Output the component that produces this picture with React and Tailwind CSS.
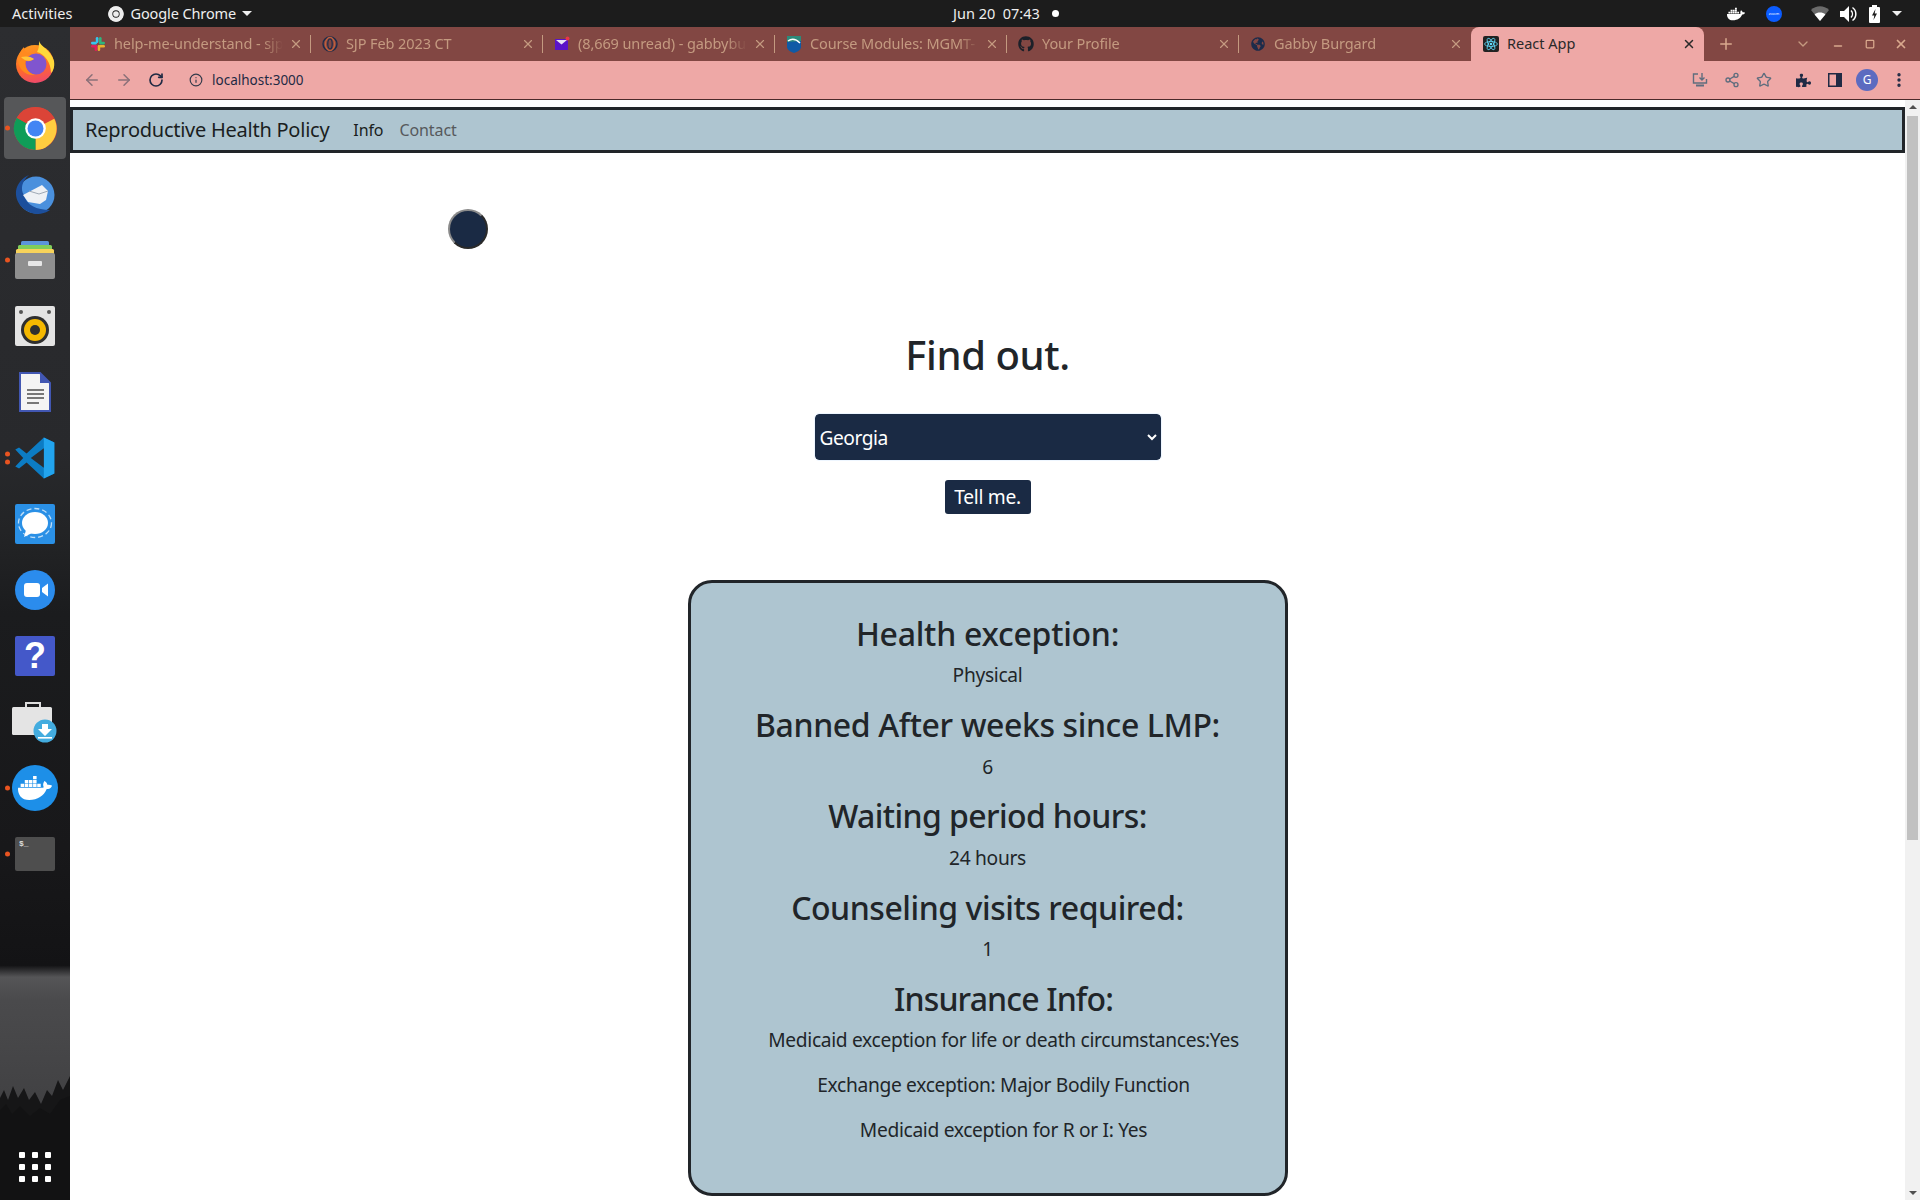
import React from "react";
import { ArrowLeft, ArrowRight, RotateCw, Info, Share2, Star, EllipsisVertical, X, Plus, ChevronDown, Minus, Square } from "lucide-react";
import { FaDocker, FaGithub, FaPuzzlePiece, FaGlobeAmericas } from "react-icons/fa";

const font = "font-['Noto_Sans','Open_Sans',sans-serif]";

function ChromeIcon({ size = 45, mono = false }) {
  const r = mono ? ["#eee", "#eee", "#eee"] : ["#db4437", "#0f9d58", "#ffcd40"];
  return (
    <svg width={size} height={size} viewBox="0 0 48 48">
      <circle cx="24" cy="24" r="23" fill={r[0]} />
      <path d="M24 24 L44 13.5 A23 23 0 0 1 24 47 Z" fill={r[2]} />
      <path d="M24 24 L24 47 A23 23 0 0 1 4 12.5 Z" fill={r[1]} />
      <path d="M4 12.5 A23 23 0 0 1 44 13 L24 13 A11 11 0 0 0 14.5 18.5 Z" fill={r[0]} />
      <circle cx="24" cy="24" r="11" fill={mono ? "#1c1c1c" : "#fff"} />
      <circle cx="24" cy="24" r="8.5" fill={mono ? "#eee" : "#4285f4"} />
    </svg>
  );
}

function Firefox() {
  return (
    <svg width="40" height="42" viewBox="0 0 40 42">
      <defs>
        <linearGradient id="ff" x1="0.3" y1="0" x2="0.5" y2="1">
          <stop offset="0" stopColor="#ff9a1f" />
          <stop offset="0.6" stopColor="#ff6a2b" />
          <stop offset="1" stopColor="#ef4a6a" />
        </linearGradient>
      </defs>
      <circle cx="20" cy="23" r="19" fill="url(#ff)" />
      <path d="M24 0 C25 5 36 9 39 20 C40 26 38 30 36 32 C36 22 30 13 22 11 C24 8 24 4 24 0 Z" fill="#ffd93b" />
      <circle cx="21" cy="23" r="10.5" fill="#8055cf" />
      <path d="M3 20 C3 14 6 9 9 6 C9 10 12 12 15 13 C12 15 12 16 19 18 C15 21 13 20 10 20 C10 27 13 32 20 34 C10 35 4 28 3 20 Z" fill="#ff8a1f" />
      <path d="M6 16 C10 15 16 15 19 18 C15 21 9 20 6 16 Z" fill="#ffc53b" />
    </svg>
  );
}

function Thunderbird() {
  return (
    <svg width="40" height="40" viewBox="0 0 40 40">
      <circle cx="21" cy="21" r="18.5" fill="#4a90dd" />
      <path d="M1 17 C0 28 8 38 21 40 C28 40 32 38 35 36 C22 36 11 31 9 21 C5 15 7 7 14 1 C7 4 2 10 1 17 Z" fill="#1c4f9c" />
      <path d="M8 21 L27 11 L33 17 L31 26 L25 30 L13 28 Z" fill="#eef1f5" />
      <path d="M14 17 L24 20 L33 17" stroke="#9fa9b5" strokeWidth="1" fill="none" />
    </svg>
  );
}

function Files() {
  return (
    <svg width="40" height="38" viewBox="0 0 40 38">
      <rect x="6" y="0" width="28" height="8" rx="1.5" fill="#5b95dc" />
      <rect x="3" y="4" width="34" height="8" rx="1.5" fill="#7fce5b" />
      <rect x="1" y="8" width="38" height="8" rx="1.5" fill="#f8d35a" />
      <rect x="0" y="12" width="40" height="26" rx="2" fill="#8f8f8f" />
      <rect x="13" y="20" width="14" height="5" rx="1" fill="#e6e6e6" />
    </svg>
  );
}

function Rhythmbox() {
  return (
    <svg width="40" height="40" viewBox="0 0 40 40">
      <rect width="40" height="40" rx="2" fill="#e4e4e4" />
      <circle cx="6" cy="6" r="2" fill="#555" />
      <circle cx="34" cy="6" r="2" fill="#555" />
      <circle cx="20" cy="24" r="14" fill="#2f2f2f" />
      <circle cx="20" cy="24" r="11" fill="#f5b800" />
      <circle cx="20" cy="24" r="5" fill="#2f2f2f" />
    </svg>
  );
}

function Writer() {
  return (
    <svg width="32" height="40" viewBox="0 0 32 40">
      <path d="M1 1 H21 L31 11 V39 H1 Z" fill="#f4f4f4" stroke="#4257b2" strokeWidth="2" />
      <path d="M21 1 L31 11 H21 Z" fill="#4257b2" />
      <path d="M8 18 H25 M8 22 H25 M8 26 H25 M8 31 H20" stroke="#777" strokeWidth="2" />
    </svg>
  );
}

function VSCode() {
  return (
    <svg width="42" height="42" viewBox="0 0 100 100">
      <path d="M71 99 L96 87 V13 L71 1 L30 39 L12 25 L3 30 L22 50 L3 70 L12 75 L30 61 Z" fill="#0c7cc4" />
      <path d="M71 1 L96 13 V87 L71 99 Z" fill="#22a4ee" />
      <path d="M71 27 L71 73 L40 50 Z" fill="#2b2c2f" />
    </svg>
  );
}

function Signal() {
  return (
    <svg width="40" height="40" viewBox="0 0 40 40">
      <rect width="40" height="40" rx="2" fill="#2a90e6" />
      <ellipse cx="20" cy="19" rx="13" ry="11" fill="#fff" />
      <path d="M11 26 L9 33 L17 29 Z" fill="#fff" />
      <ellipse cx="20" cy="19" rx="16.5" ry="14.5" fill="none" stroke="#fff" strokeWidth="1.3" strokeDasharray="5 3" opacity="0.7" />
    </svg>
  );
}

function ZoomApp() {
  return (
    <svg width="40" height="40" viewBox="0 0 40 40">
      <circle cx="20" cy="20" r="20" fill="#2b8ced" />
      <rect x="9" y="13" width="16" height="14" rx="3" fill="#fff" />
      <path d="M27 18 L33 13.5 V26.5 L27 22 Z" fill="#fff" />
    </svg>
  );
}

function Help() {
  return (
    <div className="flex h-[40px] w-[40px] items-center justify-center rounded-[2px] bg-[#4458c9] font-['Liberation_Sans',sans-serif] text-[36px] font-bold leading-none text-white">?</div>
  );
}

function Software() {
  return (
    <svg width="46" height="42" viewBox="0 0 46 42">
      <path d="M14 6 V2 H28 V6" fill="none" stroke="#ddd" strokeWidth="2" />
      <rect x="0" y="6" width="40" height="28" rx="1.5" fill="#e4e4e4" />
      <circle cx="33" cy="30" r="11.5" fill="#43acdf" />
      <path d="M30 23 H36 V28 H40 L33 35 L26 28 H30 Z" fill="#fff" />
      <rect x="26" y="36" width="14" height="1.6" fill="#fff" />
    </svg>
  );
}

function DockerDock() {
  return (
    <div className="flex h-[46px] w-[46px] items-center justify-center rounded-full bg-[#1d8fe8] text-white">
      <FaDocker size={34} />
    </div>
  );
}

function Terminal() {
  return (
    <div className="flex h-[34px] w-[40px] items-start rounded-[2px] bg-[#4e4e4e] px-[4px] pt-[1px] text-[8px] font-bold leading-[12px] text-[#ddd]">
      <span className="font-['Liberation_Mono',monospace]">$_</span>
    </div>
  );
}

function GridIcon() {
  return (
    <div className="grid grid-cols-3 gap-x-[7px] gap-y-[6px]">
      {[0, 1, 2, 3, 4, 5, 6, 7, 8].map((i) => (
        <div key={i} className="h-[6px] w-[6px] rounded-[1px] bg-white" />
      ))}
    </div>
  );
}

function DockItem({ children, dots = 0, active = false }) {
  return (
    <div className="relative flex h-[66px] w-[70px] shrink-0 items-center justify-center">
      {active && <div className="absolute inset-x-[4px] inset-y-[2px] rounded-[4px] bg-[#565759]" />}
      <div className="relative flex items-center justify-center">{children}</div>
      {dots > 0 && (
        <div className="absolute left-[5px] top-1/2 flex -translate-y-1/2 flex-col gap-[3px]">
          {Array.from({ length: dots }).map((_, i) => (
            <div key={i} className="h-[5px] w-[5px] rounded-full bg-[#e95420]" />
          ))}
        </div>
      )}
    </div>
  );
}

function Trees() {
  return (
    <svg className="absolute bottom-0 left-0" width="70" height="130" viewBox="0 0 70 130" preserveAspectRatio="none">
      <path d="M0 28 L4 20 L8 30 L13 16 L18 28 L24 18 L29 30 L35 22 L41 34 L47 20 L52 26 L58 10 L63 20 L70 6 V130 H0 Z" fill="#161617" />
      <path d="M0 40 L6 34 L12 44 L20 36 L30 46 L40 38 L50 44 L60 30 L70 26 V130 H0 Z" fill="#121213" />
    </svg>
  );
}

function Dock() {
  return (
    <aside className="relative flex w-[70px] shrink-0 flex-col bg-[linear-gradient(180deg,#2c2d30_0%,#28292c_36%,#232426_43%,#1b1c1e_50%,#18181a_70%,#131315_80%,#555557_81%,#4a4a4c_83%,#414143_92%,#161617_100%)] pt-[2px]">
      <Trees />
      <DockItem><Firefox /></DockItem>
      <DockItem active dots={1}><ChromeIcon /></DockItem>
      <DockItem><Thunderbird /></DockItem>
      <DockItem dots={1}><Files /></DockItem>
      <DockItem><Rhythmbox /></DockItem>
      <DockItem><Writer /></DockItem>
      <DockItem dots={2}><VSCode /></DockItem>
      <DockItem><Signal /></DockItem>
      <DockItem><ZoomApp /></DockItem>
      <DockItem><Help /></DockItem>
      <DockItem><Software /></DockItem>
      <DockItem dots={1}><DockerDock /></DockItem>
      <DockItem dots={1}><Terminal /></DockItem>
      <div className="relative mt-auto"><DockItem><GridIcon /></DockItem></div>
    </aside>
  );
}

function WifiWedge() {
  return (
    <svg width="18" height="15" viewBox="0 0 18 15">
      <path d="M0 4 C5 -1 13 -1 18 4 L9 15 Z" fill="#6a6a6a" />
      <path d="M3.6 8.4 C6.5 6 11.5 6 14.4 8.4 L9 15 Z" fill="#fff" />
    </svg>
  );
}

function SpeakerIcon() {
  return (
    <svg width="18" height="16" viewBox="0 0 18 16">
      <path d="M0 5 H4 L9 0 V16 L4 11 H0 Z" fill="#fff" />
      <path d="M11 4.5 A5 5 0 0 1 11 11.5" fill="none" stroke="#fff" strokeWidth="1.5" />
      <path d="M12.5 1.5 A8 8 0 0 1 12.5 14.5" fill="none" stroke="#fff" strokeWidth="1.5" />
    </svg>
  );
}

function BatteryIcon() {
  return (
    <svg width="11" height="18" viewBox="0 0 11 18">
      <rect x="3" y="0" width="5" height="2" fill="#fff" />
      <rect x="0" y="2" width="11" height="16" rx="1" fill="#fff" />
      <path d="M6.5 4 L3 10.5 H5.3 L4.5 15 L8 8.5 H5.7 Z" fill="#1c1c1c" />
    </svg>
  );
}

function TopBar() {
  return (
    <header className={`relative flex h-[27px] shrink-0 items-center bg-[#1c1c1c] pl-[12px] text-[14.5px] text-[#eeeeee] ${font}`}>
      <span>Activities</span>
      <span className="ml-[36px] flex items-center gap-[6px]">
        <ChromeIcon size={16} mono />
        <span className="tracking-[-0.1px]">Google Chrome</span>
        <span className="h-0 w-0 border-x-[5px] border-t-[5px] border-x-transparent border-t-[#eeeeee]" />
      </span>
      <span className="absolute left-[953px] top-[3px] flex items-center gap-[12px]">
        <span>Jun 20&nbsp;&nbsp;07:43</span>
        <span className="h-[7px] w-[7px] rounded-full bg-white" />
      </span>
      <div className="ml-auto flex items-center pr-[18px]">
        <FaDocker size={18} className="text-white" />
        <div className="ml-[21px] flex h-[16px] w-[16px] items-center justify-center rounded-full bg-[#0b5cff] text-[4px] text-white">zoom</div>
        <span className="ml-[29px]"><WifiWedge /></span>
        <span className="ml-[11px]"><SpeakerIcon /></span>
        <span className="ml-[11px]"><BatteryIcon /></span>
        <span className="ml-[12px] h-0 w-0 border-x-[5px] border-t-[5px] border-x-transparent border-t-[#eeeeee]" />
      </div>
    </header>
  );
}

function SlackIcon() {
  return (
    <svg width="16" height="16" viewBox="0 0 16 16">
      <rect x="5.8" y="1" width="2.6" height="6" rx="1.3" fill="#36c5f0" />
      <rect x="1" y="5.8" width="6" height="2.6" rx="1.3" fill="#36c5f0" />
      <rect x="9" y="1" width="2.6" height="6" rx="1.3" fill="#2eb67d" />
      <rect x="9" y="5.8" width="6" height="2.6" rx="1.3" fill="#2eb67d" />
      <rect x="7.6" y="9" width="2.6" height="6" rx="1.3" fill="#ecb22e" />
      <rect x="9" y="9" width="6" height="2.6" rx="1.3" fill="#ecb22e" />
      <rect x="4.6" y="9" width="2.6" height="6" rx="1.3" fill="#e01e5a" />
      <rect x="1" y="9" width="6" height="2.6" rx="1.3" fill="#e01e5a" />
    </svg>
  );
}

function RingIcon() {
  return (
    <svg width="16" height="16" viewBox="0 0 16 16" fill="none">
      <circle cx="8" cy="8" r="7" stroke="#1c2b4a" strokeWidth="1.4" />
      <ellipse cx="8" cy="8" rx="4.6" ry="6.6" stroke="#c0603c" strokeWidth="1.2" />
      <ellipse cx="8" cy="8" rx="2.2" ry="5" stroke="#1c2b4a" strokeWidth="1.2" />
    </svg>
  );
}

function MailIcon() {
  return (
    <svg width="16" height="16" viewBox="0 0 16 16">
      <rect x="1" y="3" width="13" height="11" fill="#5a14c8" />
      <path d="M2 4 L7.5 8.5 L13 4 Z" fill="#e9e4f5" />
      <circle cx="13.5" cy="2.5" r="2" fill="#e8344a" />
    </svg>
  );
}

function ShieldIcon() {
  return (
    <svg width="14" height="18" viewBox="0 0 14 18">
      <path d="M0 1 H14 V12 C14 15 10 17 7 18 C4 17 0 15 0 12 Z" fill="#0f5aa6" />
      <path d="M0 1 H14 V6 L0 7 Z" fill="#2d8a7a" />
      <path d="M1 6 C5 3 9 4 13 8" stroke="#fff" strokeWidth="1.5" fill="none" />
    </svg>
  );
}

function ReactIcon() {
  return (
    <svg width="16" height="16" viewBox="0 0 16 16" fill="none">
      <rect width="16" height="16" rx="2" fill="#222" />
      <g stroke="#61dafb" strokeWidth="0.8">
        <ellipse cx="8" cy="8" rx="6.4" ry="2.5" />
        <ellipse cx="8" cy="8" rx="6.4" ry="2.5" transform="rotate(60 8 8)" />
        <ellipse cx="8" cy="8" rx="6.4" ry="2.5" transform="rotate(120 8 8)" />
      </g>
      <circle cx="8" cy="8" r="1.3" fill="#61dafb" />
    </svg>
  );
}

const tabs = [
  { title: "help-me-understand - sjp", icon: <SlackIcon /> },
  { title: "SJP Feb 2023 CT", icon: <RingIcon /> },
  { title: "(8,669 unread) - gabbybu", icon: <MailIcon /> },
  { title: "Course Modules: MGMT-", icon: <ShieldIcon /> },
  { title: "Your Profile", icon: <FaGithub size={16} className="text-[#1c2029]" /> },
  { title: "Gabby Burgard", icon: <FaGlobeAmericas size={14} className="text-[#1c2b4a]" /> },
];

function TabBar() {
  return (
    <div className={`flex h-[34px] shrink-0 items-stretch bg-[#824743] pl-[9px] text-[14.5px] ${font}`}>
      {tabs.map((t) => (
        <div key={t.title} className="relative flex w-[232px] items-center pl-[11px] pr-[8px] text-[#c49a80]">
          <span className="flex w-[16px] shrink-0 items-center justify-center">{t.icon}</span>
          <span className="ml-[8px] min-w-0 flex-1 overflow-hidden whitespace-nowrap tracking-[-0.1px] [mask-image:linear-gradient(90deg,#000_88%,transparent_100%)]">{t.title}</span>
          <X size={14} className="ml-[6px] shrink-0" />
          {t.title !== "Gabby Burgard" && <span className="absolute right-0 top-[8px] h-[18px] w-px bg-[#c49a80]" />}
        </div>
      ))}
      <div className="flex w-[233px] items-center rounded-t-[8px] bg-[#eea8a6] pl-[12px] pr-[8px] text-[#2a2a2a]">
        <ReactIcon />
        <span className="ml-[8px] flex-1">React App</span>
        <X size={14} strokeWidth={2.5} />
      </div>
      <Plus size={18} className="ml-[13px] self-center text-[#d9a98e]" />
      <ChevronDown size={16} className="ml-[60px] self-center text-[#c49a80]" />
      <Minus size={12} strokeWidth={3} className="ml-[21px] self-center translate-y-[2px] text-[#d9a98e]" />
      <Square size={10} strokeWidth={3} className="ml-[21px] self-center text-[#d9a98e]" />
      <X size={14} strokeWidth={3} className="ml-[19px] self-center text-[#d9a98e]" />
    </div>
  );
}

function InstallIcon() {
  return (
    <svg width="16" height="16" viewBox="0 0 16 16" fill="none" stroke="#5f6d7e" strokeWidth="1.4">
      <path d="M6 2 H1.5 V11 H14.5 V7" />
      <path d="M10 1 V8 M7.5 5.5 L10 8 L12.5 5.5" />
      <path d="M4 13.5 H12" strokeWidth="2" />
    </svg>
  );
}

function PanelIcon() {
  return (
    <svg width="14" height="14" viewBox="0 0 14 14">
      <rect x="0.75" y="0.75" width="12.5" height="12.5" fill="none" stroke="#1f2a44" strokeWidth="1.5" />
      <rect x="8" y="1" width="5" height="12" fill="#1f2a44" />
    </svg>
  );
}

function Toolbar() {
  return (
    <div className={`relative flex h-[38px] shrink-0 items-center bg-[#eea8a6] pl-[13px] pr-[12px] ${font}`}>
      <ArrowLeft size={18} className="text-[#8a7078]" />
      <ArrowRight size={18} className="ml-[14px] text-[#8a7078]" />
      <RotateCw size={16} strokeWidth={2.5} className="ml-[15px] text-[#1f2a44]" />
      <Info size={14} className="ml-[25px] text-[#333a4a]" />
      <span className="ml-[9px] text-[13.5px] text-[#1f2a44]">localhost:3000</span>
      <div className="ml-auto flex items-center">
        <InstallIcon />
        <Share2 size={16} className="ml-[16px] text-[#5f6d7e]" />
        <Star size={16} className="ml-[16px] text-[#5f6d7e]" />
        <FaPuzzlePiece size={15} className="ml-[24px] text-[#1f2a44]" />
        <span className="ml-[17px]"><PanelIcon /></span>
        <span className="ml-[14px] flex h-[22px] w-[22px] items-center justify-center rounded-full bg-[#5c6bc0] text-[12px] text-white">G</span>
        <EllipsisVertical size={18} strokeWidth={2.5} className="ml-[12px] text-[#1f2a44]" />
      </div>
    </div>
  );
}

function Scrollbar() {
  return (
    <div className="flex w-[15px] shrink-0 flex-col items-center bg-[#f1f1f1] pt-[5px]">
      <span className="h-0 w-0 border-x-[4px] border-b-[4px] border-x-transparent border-b-[#505050]" />
      <div className="mt-[7px] h-[724px] w-[11px] bg-[#c1c1c1]" />
      <span className="mb-[5px] mt-auto h-0 w-0 border-x-[4px] border-t-[4px] border-x-transparent border-t-[#505050]" />
    </div>
  );
}

function Section({ title, value, track }) {
  return (
    <>
      <h2 className={`mb-[8px] text-[32px] font-medium leading-[38.4px] ${track}`}>{title}</h2>
      <p className="mb-[16px] text-[19.2px] leading-[28.8px] tracking-[-0.32px]">{value}</p>
    </>
  );
}

function Page() {
  const li = "mb-[16px] text-[19.2px] leading-[28.8px] tracking-[-0.32px]";
  return (
    <main className={`min-w-0 flex-1 overflow-hidden bg-white text-[#212529] ${font}`}>
      <nav className="mt-[7px] flex h-[46px] items-center border-[3px] border-[#212529] bg-[#aec5d0] pl-[12px]">
        <span className="text-[20px] leading-[30px] tracking-[-0.25px] text-[#1a1e21]">Reproductive Health Policy</span>
        <span className="ml-[24px] text-[16px] tracking-[-0.1px] text-[#1a1e21]">Info</span>
        <span className="ml-[16px] text-[16px] tracking-[-0.1px] text-[#56595c]">Contact</span>
      </nav>
      <div className="ml-[378px] mt-[56px] h-[40px] w-[40px] rounded-full border-[2px] border-b-[#2a2a2a] border-l-[#8a8a8a] border-r-[#2a2a2a] border-t-[#8a8a8a] bg-[#1a2a44]" />
      <div className="flex flex-col items-center">
        <h1 className="mt-[82px] text-[40px] font-medium leading-[48px] tracking-[-0.4px]">Find out.</h1>
        <select className="mt-[35px] h-[46px] w-[346px] rounded-[4px] border border-[#1a2a44] bg-[#1a2a44] text-[19.2px] tracking-[-0.5px] text-white outline outline-[1px] outline-[#eef6ff]" defaultValue="Georgia">
          <option>Georgia</option>
        </select>
        <button className="mt-[20px] h-[34px] w-[86px] rounded-[3px] bg-[#1a2a44] text-[19.2px] tracking-[-0.3px] text-white">Tell me.</button>
        <section className="mt-[66px] h-[616px] w-[600px] rounded-[24px] border-[3px] border-[#212529] bg-[#aec5d0] pt-[32px] text-center">
          <Section title="Health exception:" value="Physical" track="tracking-[-0.25px]" />
          <Section title="Banned After weeks since LMP:" value="6" track="tracking-[-0.4px]" />
          <Section title="Waiting period hours:" value="24 hours" track="tracking-[-0.6px]" />
          <Section title="Counseling visits required:" value="1" track="tracking-[-0.45px]" />
          <h2 className="mb-[8px] pl-[32px] text-[32px] font-medium leading-[38.4px] tracking-[-0.85px]">Insurance Info:</h2>
          <ul className="pl-[32px]">
            <li className={li}>Medicaid exception for life or death circumstances:Yes</li>
            <li className={li}>Exchange exception: Major Bodily Function</li>
            <li className={li}>Medicaid exception for R or I: Yes</li>
          </ul>
        </section>
      </div>
    </main>
  );
}

export default function App() {
  return (
    <div className="flex h-[1200px] w-[1920px] flex-col overflow-hidden">
      <TopBar />
      <div className="flex min-h-0 flex-1">
        <Dock />
        <div className="flex min-w-0 flex-1 flex-col">
          <TabBar />
          <Toolbar />
          <div className="h-px shrink-0 bg-[#4a2a2a]" />
          <div className="flex min-h-0 flex-1">
            <Page />
            <Scrollbar />
          </div>
        </div>
      </div>
    </div>
  );
}
